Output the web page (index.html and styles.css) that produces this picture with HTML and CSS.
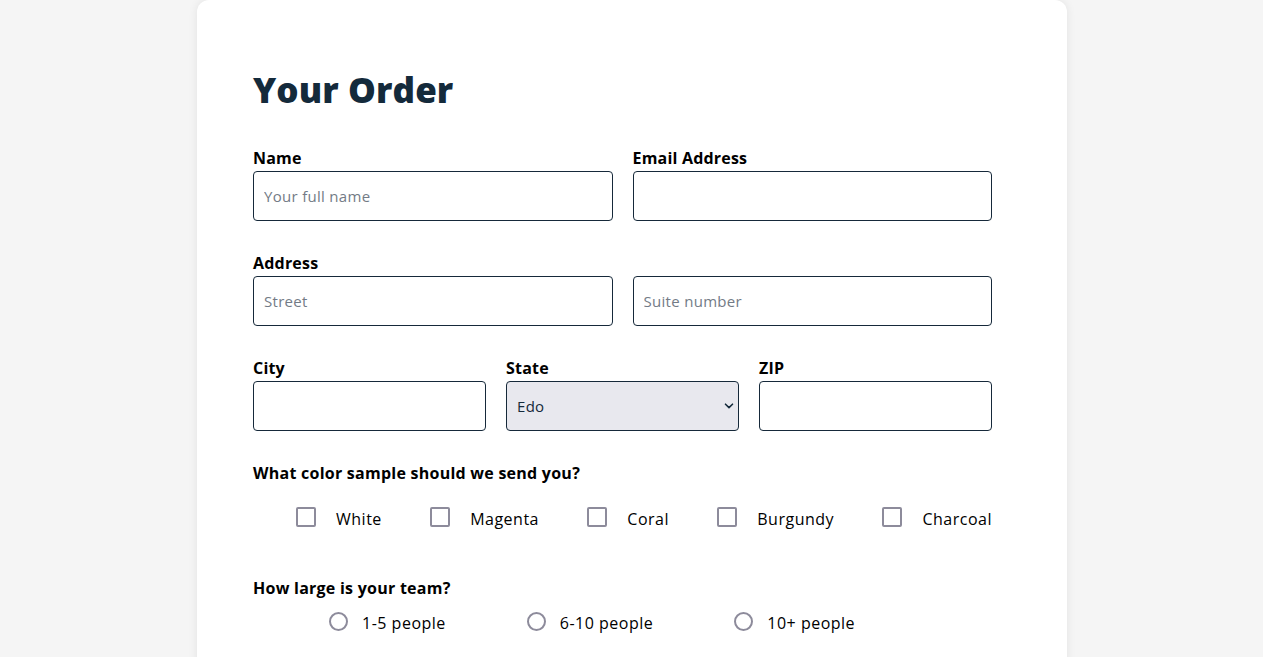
FILE: index.html
```html
<!DOCTYPE html>
<html lang="en">
<head>
<meta charset="utf-8">
<title>Your Order</title>
<link rel="stylesheet" href="styles.css">
</head>
<body>
<main class="card">
  <h1 class="title">Your Order</h1>
  <form class="form">
    <div class="row two">
      <div class="field">
        <label class="label" for="name">Name</label>
        <input class="input" id="name" type="text" placeholder="Your full name">
      </div>
      <div class="field">
        <label class="label" for="email">Email Address</label>
        <input class="input" id="email" type="email">
      </div>
    </div>
    <div class="row two">
      <div class="field">
        <label class="label" for="street">Address</label>
        <input class="input" id="street" type="text" placeholder="Street">
      </div>
      <div class="field">
        <span class="label">&nbsp;</span>
        <input class="input" id="suite" type="text" placeholder="Suite number">
      </div>
    </div>
    <div class="row three">
      <div class="field">
        <label class="label" for="city">City</label>
        <input class="input" id="city" type="text">
      </div>
      <div class="field">
        <label class="label" for="state">State</label>
        <div class="select-wrap">
          <select class="input select" id="state">
            <option>Edo</option>
          </select>
          <svg class="chevron" width="10" height="6" viewBox="0 0 10 6"><path d="M1.5 1.2 L5 4.6 L8.5 1.2" fill="none" stroke="#142a3b" stroke-width="1.6" stroke-linecap="round" stroke-linejoin="round"/></svg>
        </div>
      </div>
      <div class="field">
        <label class="label" for="zip">ZIP</label>
        <input class="input" id="zip" type="text">
      </div>
    </div>

    <p class="question">What color sample should we send you?</p>
    <div class="checks">
      <label class="opt"><input type="checkbox" class="box"><span>White</span></label>
      <label class="opt"><input type="checkbox" class="box"><span>Magenta</span></label>
      <label class="opt"><input type="checkbox" class="box"><span>Coral</span></label>
      <label class="opt"><input type="checkbox" class="box"><span>Burgundy</span></label>
      <label class="opt"><input type="checkbox" class="box"><span>Charcoal</span></label>
    </div>

    <p class="question q2">How large is your team?</p>
    <div class="radios">
      <label class="ropt"><input type="radio" name="team" class="radio"><span>1-5 people</span></label>
      <label class="ropt"><input type="radio" name="team" class="radio"><span>6-10 people</span></label>
      <label class="ropt"><input type="radio" name="team" class="radio"><span>10+ people</span></label>
    </div>
  </form>
</main>
</body>
</html>
```

FILE: styles.css
```css
* { box-sizing: border-box; }
html, body { margin: 0; padding: 0; }
body {
  background: #f5f5f5;
  font-family: "Open Sans", "Noto Sans", sans-serif;
  color: #000;
  height: 657px;
  overflow: hidden;
}
.card {
  width: 870px;
  margin: 0 auto 0 197px;
  background: #fff;
  border-radius: 12px;
  box-shadow: 0 0 10px rgba(0,0,0,0.08);
  padding: 68px 56px 40px;
  min-height: 700px;
}
.title {
  margin: 0;
  font-size: 35px;
  line-height: 44px;
  font-weight: 800;
  color: #142a3b;
  letter-spacing: 0.1px;
}
.form { width: 739px; margin-top: 36px; }
.row { display: grid; gap: 20px; margin-bottom: 32px; }
.two { grid-template-columns: 1fr 1fr; }
.three { grid-template-columns: 1fr 1fr 1fr; }
.field { display: flex; flex-direction: column; }
.label {
  font-size: 16px;
  line-height: 20px;
  font-weight: 700;
  margin-bottom: 3px;
  letter-spacing: 0.2px;
}
.input {
  height: 50px;
  border: 1px solid #16293a;
  border-radius: 4px;
  padding: 0 10px;
  font-family: inherit;
  font-size: 15px;
  letter-spacing: 0.3px;
  color: #142a3b;
  background: #fff;
  width: 100%;
}
.input::placeholder { color: #737b86; }
.select-wrap { position: relative; }
.select {
  appearance: none;
  -webkit-appearance: none;
  background: #e8e8ee;
  font-size: 15px;
  color: #142a3b;
}
.chevron { position: absolute; right: 5px; top: 22px; }
.question {
  margin: 0;
  font-size: 16px;
  line-height: 20px;
  font-weight: 700;
  letter-spacing: 0.25px;
}
.checks {
  display: flex;
  justify-content: space-between;
  padding-left: 43px;
  margin-top: 23px;
  height: 22px;
  align-items: center;
}
.opt, .ropt {
  display: flex;
  align-items: center;
  font-size: 16px;
  line-height: 22px;
  letter-spacing: 0.5px;
}
.opt span, .ropt span { padding-top: 3px; }
.box {
  appearance: none;
  -webkit-appearance: none;
  width: 20px;
  height: 20px;
  margin: 0 20px 0 0;
  border: 2px solid #8d8b9b;
  border-radius: 2px;
  background: #fff;
}
.q2 { margin-top: 50px; }
.radios {
  display: flex;
  gap: 81px;
  padding-left: 76px;
  margin-top: 13px;
  height: 20px;
  align-items: center;
}
.radio {
  appearance: none;
  -webkit-appearance: none;
  width: 19px;
  height: 19px;
  margin: 0 14px 0 0;
  border: 2px solid #8d8b9b;
  border-radius: 50%;
  background: #fff;
}
```
